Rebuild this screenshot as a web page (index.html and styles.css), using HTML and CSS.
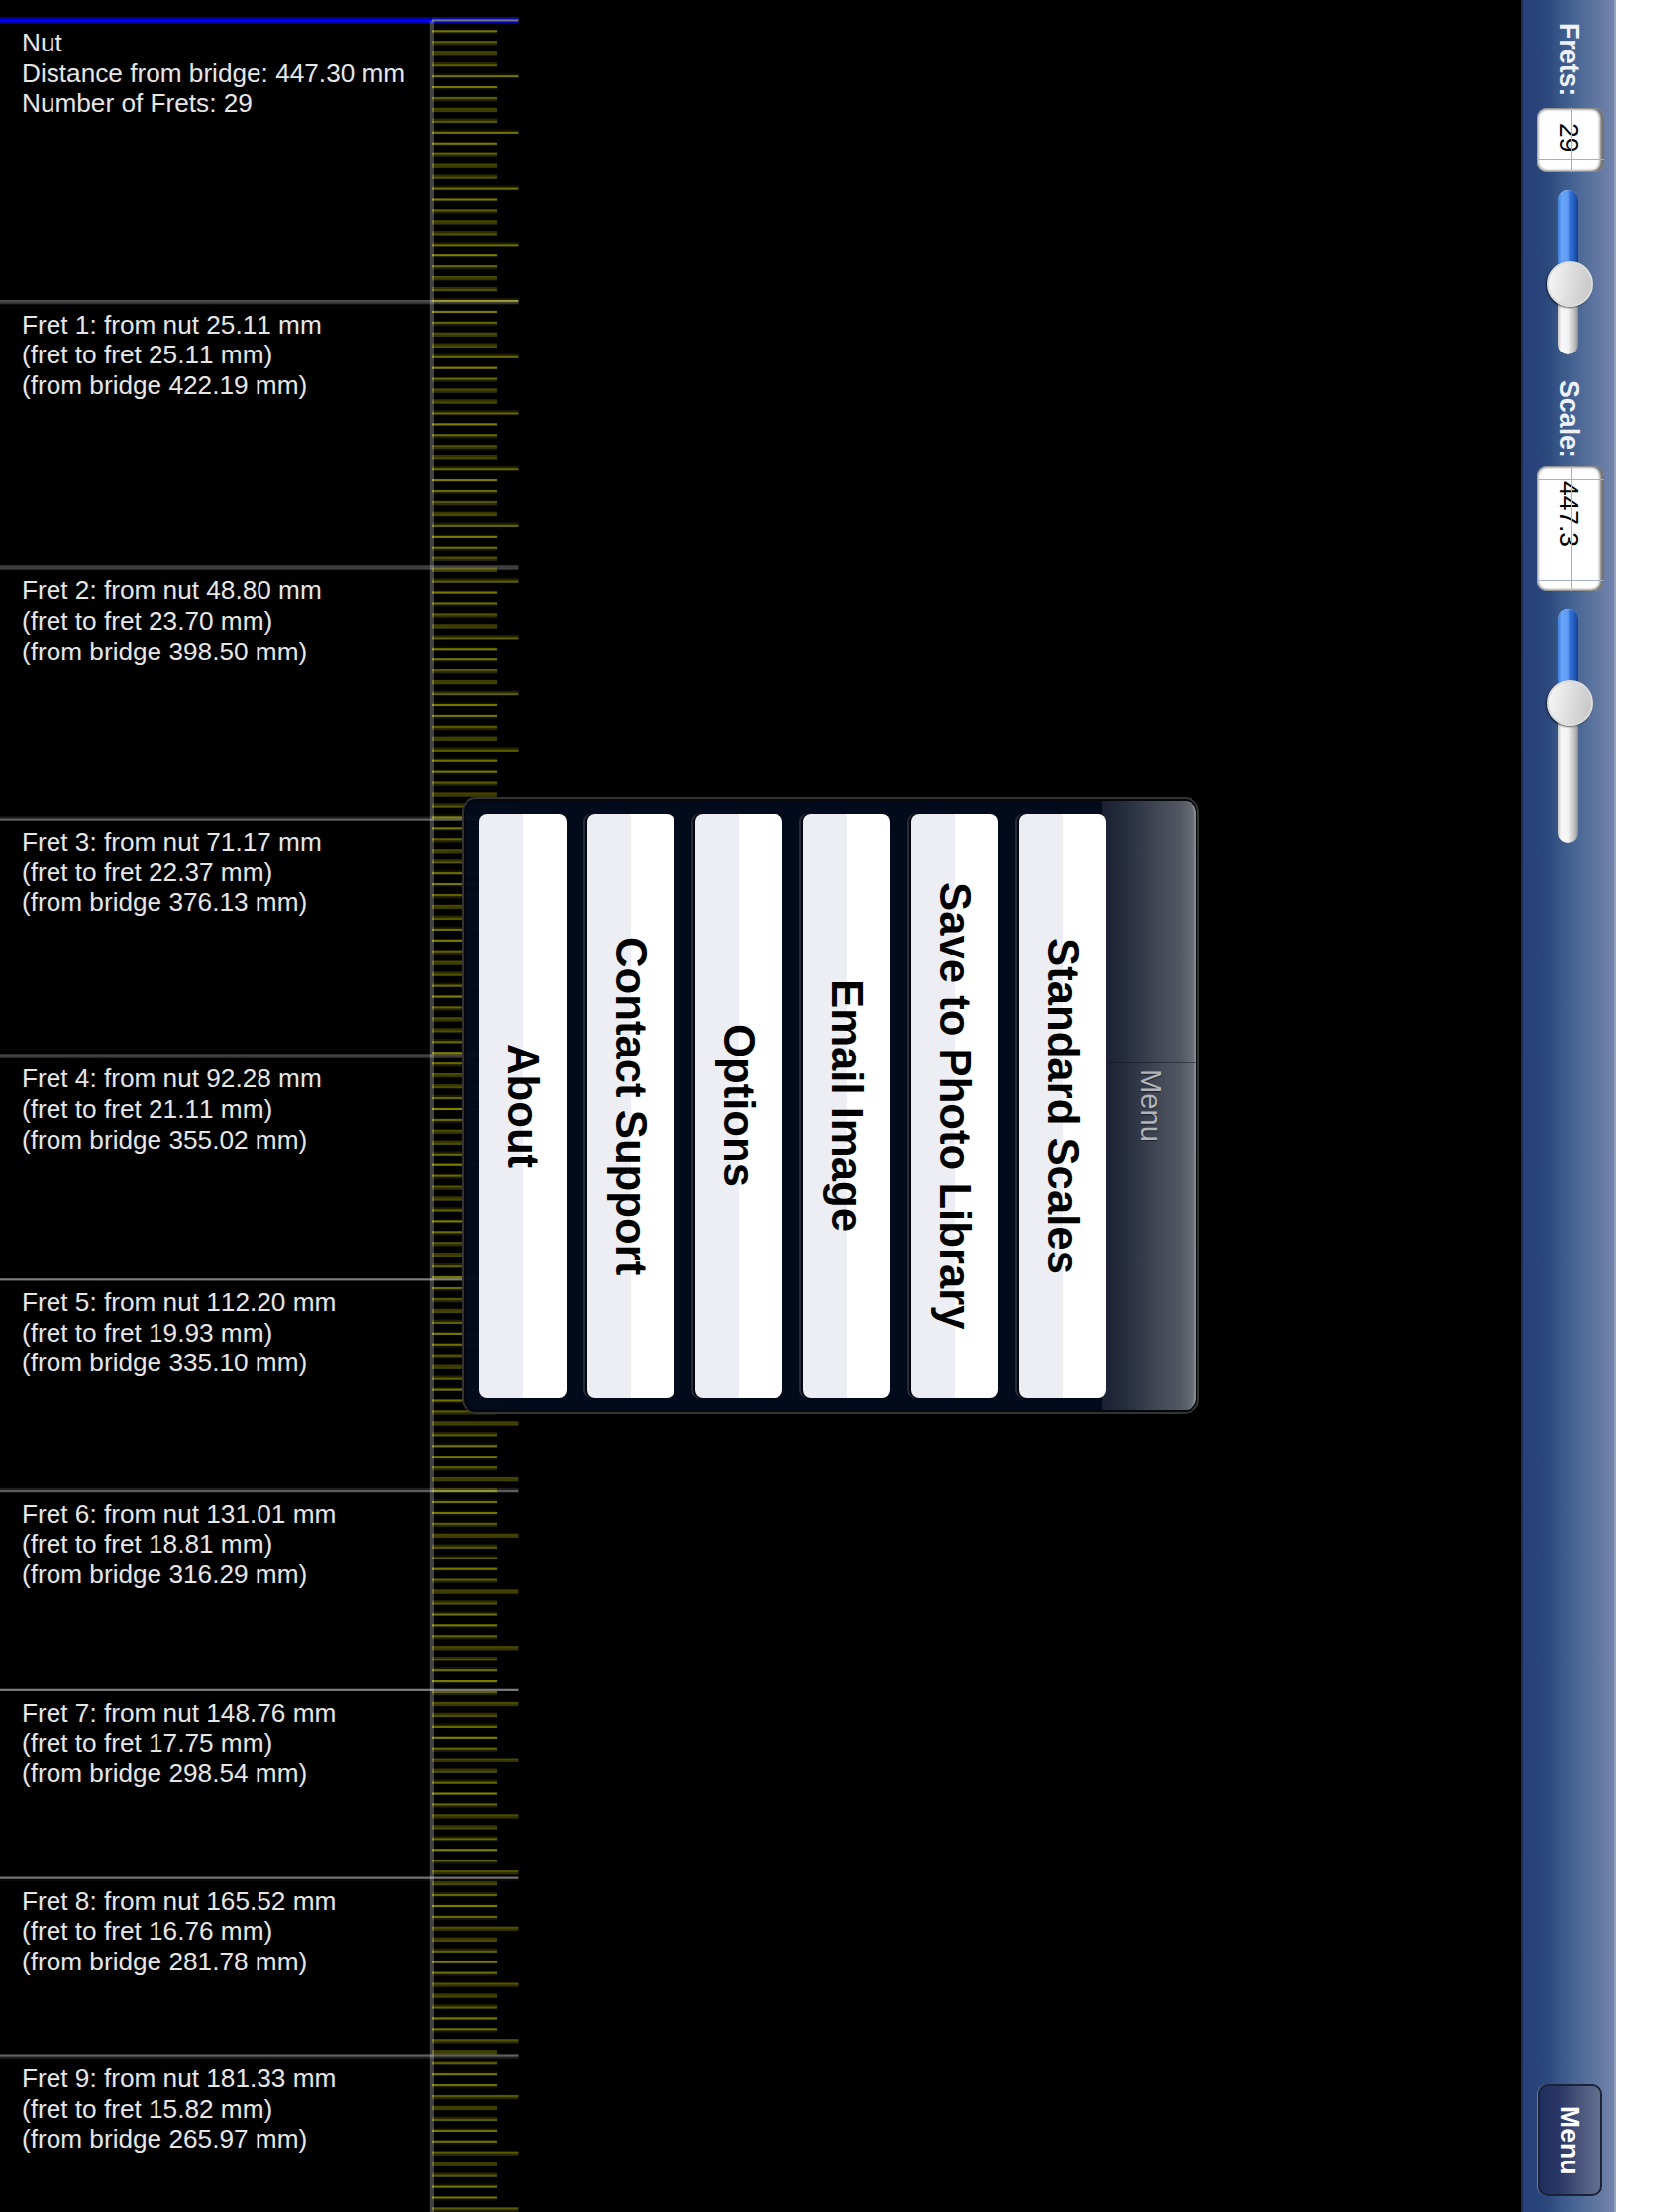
FILE: index.html
```html
<!DOCTYPE html>
<html lang="en">
<head>
<meta charset="utf-8">
<title>Fret Calculator</title>
<link rel="stylesheet" href="styles.css">
</head>
<body>
<main class="app">
  <div class="board">
    <svg class="ruler" id="ruler" width="540" height="2234" viewBox="0 0 540 2234" aria-hidden="true"></svg>
    <ol class="frets">
      <li class="fret" style="--gap:25.11"><p>Nut</p><p>Distance from bridge: 447.30 mm</p><p>Number of Frets: 29</p></li>
      <li class="fret" style="--gap:23.70"><p>Fret 1: from nut 25.11 mm</p><p>(fret to fret 25.11 mm)</p><p>(from bridge 422.19 mm)</p></li>
      <li class="fret" style="--gap:22.37"><p>Fret 2: from nut 48.80 mm</p><p>(fret to fret 23.70 mm)</p><p>(from bridge 398.50 mm)</p></li>
      <li class="fret" style="--gap:21.11"><p>Fret 3: from nut 71.17 mm</p><p>(fret to fret 22.37 mm)</p><p>(from bridge 376.13 mm)</p></li>
      <li class="fret" style="--gap:19.93"><p>Fret 4: from nut 92.28 mm</p><p>(fret to fret 21.11 mm)</p><p>(from bridge 355.02 mm)</p></li>
      <li class="fret" style="--gap:18.81"><p>Fret 5: from nut 112.20 mm</p><p>(fret to fret 19.93 mm)</p><p>(from bridge 335.10 mm)</p></li>
      <li class="fret" style="--gap:17.75"><p>Fret 6: from nut 131.01 mm</p><p>(fret to fret 18.81 mm)</p><p>(from bridge 316.29 mm)</p></li>
      <li class="fret" style="--gap:16.76"><p>Fret 7: from nut 148.76 mm</p><p>(fret to fret 17.75 mm)</p><p>(from bridge 298.54 mm)</p></li>
      <li class="fret" style="--gap:15.82"><p>Fret 8: from nut 165.52 mm</p><p>(fret to fret 16.76 mm)</p><p>(from bridge 281.78 mm)</p></li>
      <li class="fret" style="--gap:13"><p>Fret 9: from nut 181.33 mm</p><p>(fret to fret 15.82 mm)</p><p>(from bridge 265.97 mm)</p></li>
    </ol>
    <section class="popup">
      <h2 class="popup-title">Menu</h2>
      <div class="popup-list">
        <button class="item">Standard Scales</button>
        <button class="item">Save to Photo Library</button>
        <button class="item">Email Image</button>
        <button class="item">Options</button>
        <button class="item">Contact Support</button>
        <button class="item">About</button>
      </div>
    </section>
  </div>
  <nav class="toolbar">
    <span class="label">Frets:</span>
    <div class="field field-frets">29</div>
    <div class="slider slider-frets"><i class="fill"></i><i class="thumb"></i></div>
    <span class="label label-scale">Scale:</span>
    <div class="field field-scale">447.3</div>
    <div class="slider slider-scale"><i class="fill"></i><i class="thumb"></i></div>
    <button class="menu-button">Menu</button>
  </nav>
</main>
<script src="ruler.js"></script>
</body>
</html>
```
FILE: styles.css
```css
* { box-sizing: border-box; }

body {
  margin: 0;
  background: #fff;
  font-family: "Liberation Sans", Arial, Helvetica, sans-serif;
  font-kerning: none;
}

button { font-family: inherit; margin: 0; padding: 0; border: 0; }

.app { display: flex; width: 1632px; height: 2234px; overflow: hidden; background: #000; }

.board { position: relative; flex: 1; height: 2234px; overflow: hidden; }

.ruler { position: absolute; left: 0; top: 0; display: block; }

.frets { list-style: none; margin: 0; padding: 20.7px 0 0 22px; position: relative; }
.fret {
  height: calc(var(--gap) * 11.338px);
  padding-top: 7.3px;
  color: #e6e6e6;
  font-size: 26.2px;
  line-height: 30.6px;
  white-space: nowrap;
}
.fret p { margin: 0; }

/* Dialog laid over the board */
.popup {
  position: absolute;
  left: 466px;
  top: 805px;
  width: 745px;
  height: 623px;
  writing-mode: vertical-rl;
  border: 2px solid #333333;
  border-radius: 15px;
  box-shadow: inset 0 0 0 2px #05070b;
  background: rgba(2, 10, 28, .96);
  overflow: hidden;
}
.popup::after {
  content: "";
  position: absolute;
  left: 650px;
  right: 0;
  top: 266px;
  height: 1px;
  background: rgba(10, 14, 24, .45);
}
.popup-title {
  margin: 2px 1px 2px 0;
  width: 95px;
  height: 615px;
  padding-left: 3px;
  display: flex;
  align-items: center;
  justify-content: center;
  border-right: 2px solid #85888f;
  border-radius: 0 12px 12px 0;
  background: linear-gradient(90deg, #1b2032, #262d3d 25%, #3a404e 50%, #535863 85%, #6c7079);
  color: #b1b3b7;
  font-size: 29.2px;
  font-weight: 400;
  text-shadow: 1px 0 1px #20242f;
}
.popup-list {
  display: flex;
  flex-direction: column;
  gap: 21.1px;
  height: 589.5px;
  margin: 15px -4.2px 0 0;
}
.item {
  writing-mode: vertical-rl;
  width: 88px;
  height: 589.5px;
  border-radius: 8px;
  background: linear-gradient(90deg, #edeef3 50%, #fff 50%);
  box-shadow: -2px 0 0 #05070c, -4px 0 0 #262c3b;
  color: #000;
  font-size: 43.7px;
  font-weight: 700;
  line-height: 88px;
  text-align: center;
}
.item:last-child { box-shadow: none; }

/* Toolbar, turned a quarter clockwise */
.toolbar {
  writing-mode: vertical-rl;
  display: flex;
  align-items: center;
  width: 96px;
  height: 2234px;
  padding: 23px 0 16px 1px;
  border-left: 2px solid #1b2e58;
  border-right: 2px solid #93a2c3;
  background: linear-gradient(90deg, #28407a, #2b477c 25%, #3f5e8e 48%, #566f9b 70%, #7485ac);
}
.label {
  flex: none;
  height: 86px;
  margin-right: 2px;
  color: #eef1f8;
  font-size: 26.8px;
  font-weight: 700;
  line-height: 32px;
}
.label-scale { margin-top: 25.5px; height: 87.5px; }

.field {
  position: relative;
  flex: none;
  width: 67px;
  margin-left: 1px;
  padding: 14.5px 2px 0 0;
  border-radius: 10px;
  background: #fff;
  box-shadow: inset -4px 0 3px #707070, inset 0 0 3px 1px #777;
  color: #000;
  font-size: 26.4px;
  line-height: 66px;
}
.field::before {
  content: "";
  position: absolute;
  left: 34px;
  top: 0;
  bottom: 0;
  width: 1px;
  background: #a3b0d0;
}
.field::after {
  content: "";
  position: absolute;
  left: 0;
  right: 0;
  border: solid #a3b0d0;
}
.field-frets { height: 65px; }
.field-frets::after { top: 52px; border-width: 1px 0 0; }
.field-scale { height: 126px; }
.field-scale::after { top: 13px; height: 101px; border-width: 1px 0; }

.slider {
  position: relative;
  flex: none;
  width: 20px;
  margin: 18px 4px 0 0;
  border-radius: 10px;
  background: linear-gradient(90deg, #c6c6c6, #f8f8f8 18%, #f3f3f3 50%, #b8b8b8 85%, #8a8a8a);
}
.slider-frets { height: 166px; }
.slider-scale { height: 236px; }
.fill {
  position: absolute;
  left: 0;
  top: 0;
  width: 20px;
  height: 90px;
  border-radius: 10px 10px 0 0;
  background: linear-gradient(90deg, #3d80d8, #68a5fa 20%, #5f9bf3 50%, #3273d9 60%, #1e56b4 85%, #103f8f);
}
.thumb {
  position: absolute;
  left: -11px;
  top: 72px;
  width: 46px;
  height: 46px;
  border: 2px solid #dcdcdc;
  border-radius: 50%;
  background: linear-gradient(100deg, #f8f8f8, #dedede 50%, #c5c5c5);
  box-shadow: -1px 1px 2px rgba(0, 0, 0, .6);
}

.menu-button {
  writing-mode: vertical-rl;
  width: 64px;
  height: 113px;
  margin-top: auto;
  border: 2px solid #1c2338;
  border-radius: 10px;
  background: linear-gradient(90deg, #1f2f60, #2c3866 35%, #48547a 65%, #62708f);
  box-shadow: -1px 0 0 #6580a8;
  color: #fff;
  font-size: 26.6px;
  font-weight: 700;
  line-height: 60px;
  text-align: center;
}
```
FILE: ruler.js
```js
// Draws the millimetre scale and fret lines on a coarse pixel grid.
const svg = document.getElementById('ruler');
const CELL = 2234 / 1024;
const PER_MM = 132 / 25.4;
const ORIGIN = 9.4;

function rect(x, y, w, h, fill, opacity) {
  const r = document.createElementNS('http://www.w3.org/2000/svg', 'rect');
  r.setAttribute('x', x);
  r.setAttribute('y', y.toFixed(2));
  r.setAttribute('width', w);
  r.setAttribute('height', h.toFixed(2));
  r.setAttribute('fill', fill);
  r.setAttribute('fill-opacity', opacity.toFixed(3));
  svg.appendChild(r);
}

// A horizontal line; every grid row it touches is tinted by how much it covers.
function line(x1, x2, centre, size, fill, alpha) {
  const top = centre - size / 2;
  const bottom = centre + size / 2;
  for (let row = Math.floor(top); row < bottom; row++) {
    const cover = Math.min(bottom, row + 1) - Math.max(top, row);
    if (cover > 0.02) rect(x1, row * CELL - 0.3, x2 - x1, CELL, fill, cover * alpha);
  }
}

line(0, 523.5, 9.5, 2.3, '#0000ff', 1);
[25.11, 48.8, 71.17, 92.28, 112.2, 131.01, 148.76, 165.52, 181.33].forEach(mm =>
  line(0, 523.5, ORIGIN + mm * PER_MM, 1, '#ffffff', 0.5));
for (let mm = 0; mm <= 195; mm++) {
  line(436, mm % 5 ? 502 : 523.5, ORIGIN + mm * PER_MM, 1, '#ffff00', 0.5);
}
rect(433.8, 20.7, 4.2, 2214, '#ffffff', 0.26);
```
